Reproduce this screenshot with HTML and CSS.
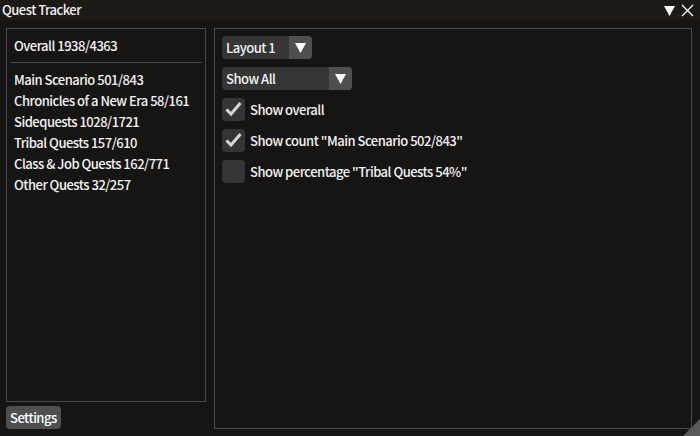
FILE: index.html
```html
<!DOCTYPE html>
<html>
<head>
<meta charset="utf-8">
<link rel="stylesheet" href="styles.css">
</head>
<body>
<div class="window">
  <div class="titlebar">
    <span class="title">Quest Tracker</span>
    <div class="title-icons">
      <svg class="ti-tri" width="11" height="11" viewBox="0 0 11 11"><polygon points="0,1 11,1 5.5,11" fill="#ffffff"/></svg>
      <svg class="ti-x" width="13" height="13" viewBox="0 0 13 13"><path d="M1 1 L12 12 M12 1 L1 12" stroke="#ffffff" stroke-width="1.3" fill="none"/></svg>
    </div>
  </div>
  <div class="body">
    <div class="left">
      <div class="list">
        <div class="item">Overall 1938/4363</div>
        <div class="sep"></div>
        <div class="item">Main Scenario 501/843</div>
        <div class="item">Chronicles of a New Era 58/161</div>
        <div class="item">Sidequests 1028/1721</div>
        <div class="item">Tribal Quests 157/610</div>
        <div class="item">Class &amp; Job Quests 162/771</div>
        <div class="item">Other Quests 32/257</div>
      </div>
      <div class="button">Settings</div>
    </div>
    <div class="right">
      <div class="combo combo-short">
        <span class="combo-text">Layout 1</span>
        <span class="combo-arrow"><svg width="11" height="10" viewBox="0 0 11 10"><polygon points="0,0 11,0 5.5,10" fill="#ffffff"/></svg></span>
      </div>
      <div class="combo combo-long">
        <span class="combo-text">Show All</span>
        <span class="combo-arrow"><svg width="11" height="10" viewBox="0 0 11 10"><polygon points="0,0 11,0 5.5,10" fill="#ffffff"/></svg></span>
      </div>
      <div class="check-row">
        <span class="checkbox"><svg width="23" height="23" viewBox="0 0 23 23"><polyline points="4.5,11.5 9,16 18.5,5" stroke="#d6d6d6" stroke-width="3" fill="none"/></svg></span>
        <span class="label">Show overall</span>
      </div>
      <div class="check-row">
        <span class="checkbox"><svg width="23" height="23" viewBox="0 0 23 23"><polyline points="4.5,11.5 9,16 18.5,5" stroke="#d6d6d6" stroke-width="3" fill="none"/></svg></span>
        <span class="label">Show count "Main Scenario 502/843"</span>
      </div>
      <div class="check-row">
        <span class="checkbox"></span>
        <span class="label">Show percentage "Tribal Quests 54%"</span>
      </div>
    </div>
  </div>
  <div class="grip"></div>
</div>
</body>
</html>
```
FILE: styles.css
```css
* { box-sizing: border-box; }
html, body {
  margin: 0;
  padding: 0;
  background: #171513;
}
body {
  font-family: "Noto Sans CJK JP", "Noto Sans", sans-serif;
  font-weight: 500;
  font-size: 13px;
  letter-spacing: -0.5px;
  color: #f2f2f2;
}
.window {
  position: relative;
  width: 700px;
  height: 436px;
  display: flex;
  flex-direction: column;
  background: #171513;
  overflow: hidden;
}
.titlebar {
  height: 20px;
  flex: none;
  display: flex;
  align-items: center;
  justify-content: space-between;
  padding: 0 6px 0 2px;
  background: #1c1916;
}
.title {
  line-height: 20px;
}
.title-icons {
  display: flex;
  align-items: center;
  gap: 6px;
  padding-top: 1px;
}
.body {
  flex: 1;
  display: flex;
  gap: 8px;
  padding: 8px 8px 7px 6px;
  min-height: 0;
}
.left {
  width: 200px;
  flex: none;
  display: flex;
  flex-direction: column;
  gap: 4px;
}
.list {
  flex: 1;
  border: 1px solid #4a4654;
  padding: 6px 3px;
}
.item {
  line-height: 21px;
  padding-left: 4px;
  white-space: nowrap;
}
.sep {
  height: 1px;
  background: #4a4654;
  margin: 6px 0 6px 0;
}
.button {
  width: 55px;
  height: 23px;
  line-height: 23px;
  padding-left: 4px;
  background: #4f4f4f;
  border-radius: 4px;
  color: #ffffff;
}
.right {
  flex: 1;
  border: 1px solid #4a4654;
  padding: 7px 7px;
  display: flex;
  flex-direction: column;
  gap: 8px;
}
.combo {
  height: 23px;
  display: flex;
  background: #353535;
  border-radius: 4px;
  overflow: hidden;
}
.combo-short { width: 90px; }
.combo-long { width: 130px; }
.combo-text {
  flex: 1;
  line-height: 23px;
  padding-left: 4px;
}
.combo-arrow {
  width: 23px;
  display: flex;
  align-items: center;
  justify-content: center;
  background: #4f4f4f;
}
.check-row {
  display: flex;
  align-items: center;
  gap: 5px;
  height: 23px;
}
.checkbox {
  width: 23px;
  height: 23px;
  background: #353535;
  border-radius: 4px;
  display: block;
}
.checkbox svg { display: block; }
.label { line-height: 23px; }
.grip {
  position: absolute;
  right: 0;
  bottom: 0;
  width: 17px;
  height: 17px;
  background: #595959;
  clip-path: polygon(100% 0, 100% 100%, 0 100%);
}
```
